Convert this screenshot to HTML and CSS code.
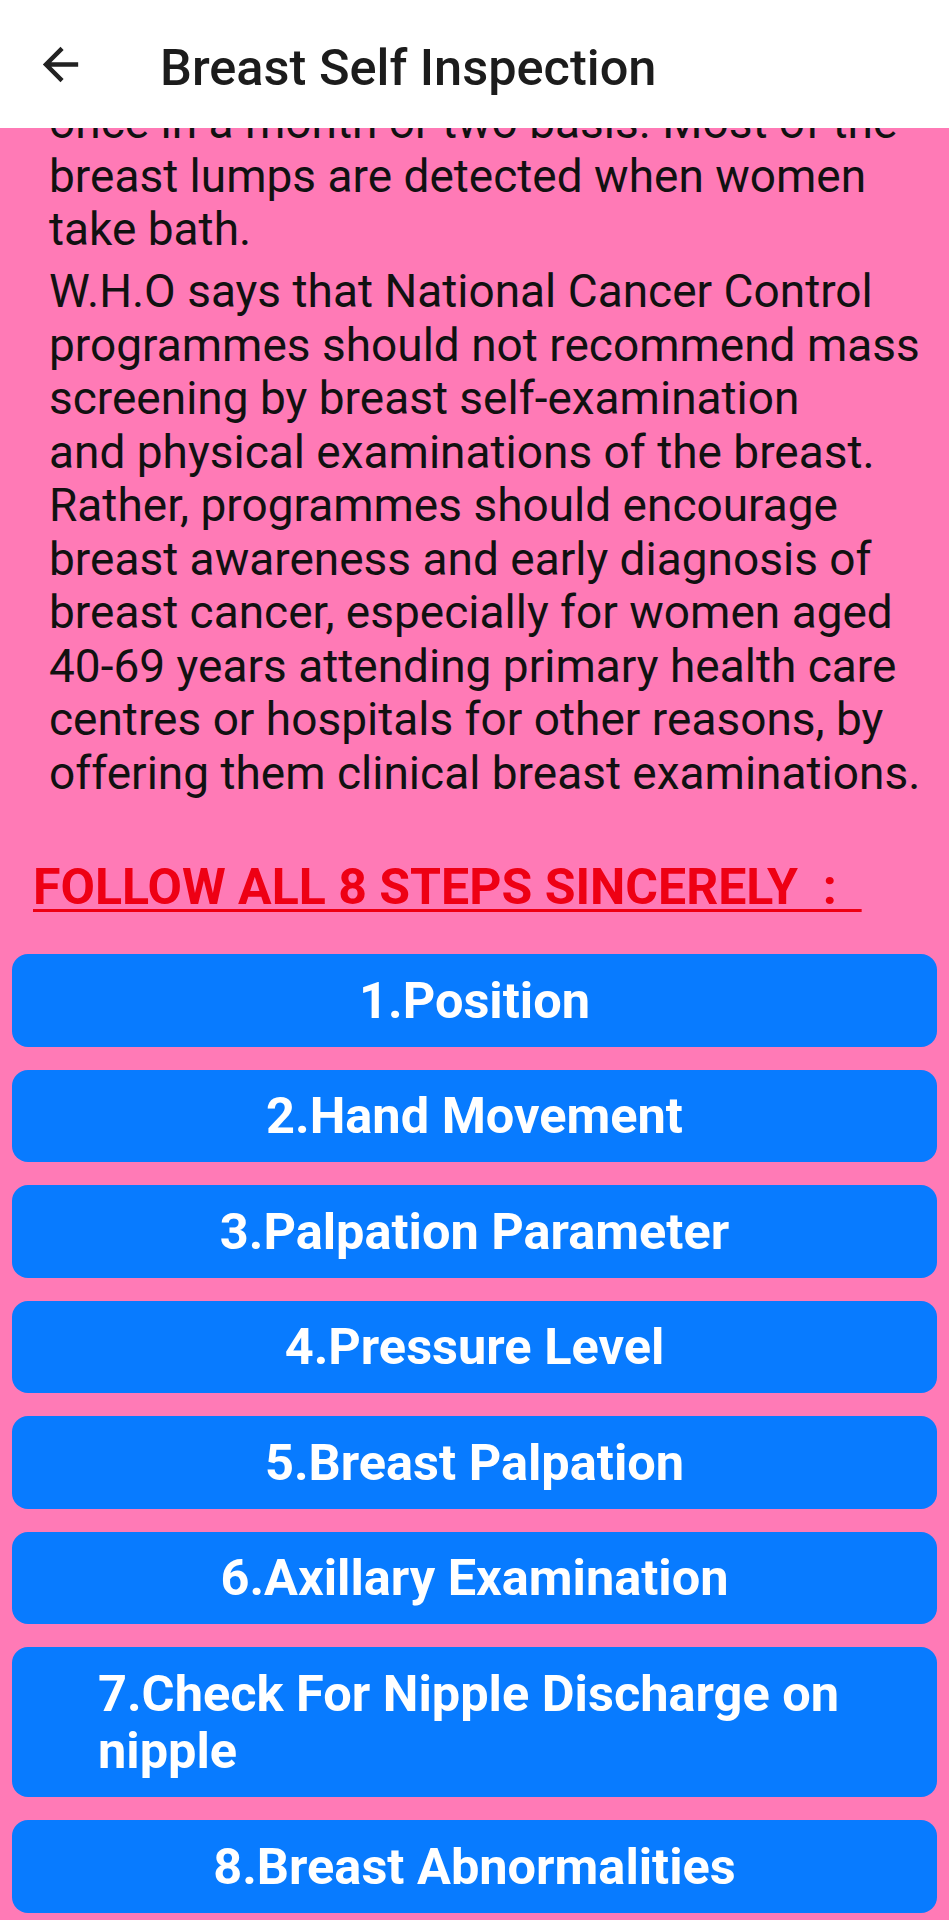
FILE: index.html
```html
<!DOCTYPE html>
<html lang="en">
<head>
<meta charset="utf-8">
<title>Breast Self Inspection</title>
<link rel="stylesheet" href="styles.css">
</head>
<body>
<div class="screen">
  <header class="toolbar">
    <button class="back" aria-label="Back">
      <svg viewBox="0 0 24 24" width="53" height="53"><path d="M20 11H7.83l5.59-5.59L12 4l-8 8 8 8 1.41-1.41L7.83 13H20v-2z" fill="#222"/></svg>
    </button>
    <h1 class="title">Breast Self Inspection</h1>
  </header>
  <main class="content">
    <div class="scroll">
      <p class="para">once in a month or two basis. Most of the breast lumps are detected when women take bath.</p>
      <p class="para">W.H.O says that National Cancer Control programmes should not recommend mass screening by breast self-examination<br>and physical examinations of the breast. Rather, programmes should encourage breast awareness and early diagnosis of breast cancer, especially for women aged <span class="nowrap">40-69</span> years attending primary health care centres or hospitals for other reasons, by offering them clinical breast examinations.</p>
      <h2 class="steps-heading">FOLLOW ALL 8 STEPS SINCERELY &nbsp;: &nbsp;</h2>
      <div class="steps">
        <button class="step"><span>1.Position</span></button>
        <button class="step"><span>2.Hand Movement</span></button>
        <button class="step"><span>3.Palpation Parameter</span></button>
        <button class="step"><span>4.Pressure Level</span></button>
        <button class="step"><span>5.Breast Palpation</span></button>
        <button class="step"><span>6.Axillary Examination</span></button>
        <button class="step"><span>7.Check For Nipple Discharge on nipple</span></button>
        <button class="step"><span>8.Breast Abnormalities</span></button>
      </div>
    </div>
  </main>
</div>
</body>
</html>
```
FILE: styles.css
```css
html, body {
  margin: 0;
  padding: 0;
}
body {
  background: #ff7ab6;
  font-family: Roboto, "Noto Sans", sans-serif;
  width: 949px;
  height: 1920px;
  overflow: hidden;
}
.screen {
  display: flex;
  flex-direction: column;
  height: 1920px;
}
.toolbar {
  position: relative;
  z-index: 2;
  flex: 0 0 128px;
  height: 128px;
  background: #fff;
  display: flex;
  align-items: center;
  box-sizing: border-box;
  padding-left: 34px;
}
.back {
  border: 0;
  background: none;
  padding: 0;
  width: 53px;
  height: 53px;
  display: flex;
}
.title {
  margin: 0 0 0 73px;
  padding-top: 7px;
  font-weight: 500;
  font-size: 50.5px;
  line-height: 60px;
  color: #1c1c1c;
}
.content {
  flex: 1;
  overflow: hidden;
}
.scroll {
  margin-top: -32px;
}
.para {
  margin: 0 10px 0 49px;
  font-size: 46px;
  line-height: 53.5px;
  color: #111;
}
.para + .para {
  margin-top: 8.5px;
}
.nowrap {
  white-space: nowrap;
}
.steps-heading {
  margin: 57px 0 0 33px;
  font-size: 50px;
  font-weight: 700;
  color: #ee0014;
  text-decoration: underline;
  text-decoration-thickness: 3px;
  text-underline-offset: 5px;
  line-height: 60px;
  white-space: pre;
}
.steps {
  display: flex;
  flex-direction: column;
  gap: 23px;
  margin: 37px 12px 0 12px;
}
.step {
  border: 0;
  border-radius: 16px;
  background: #087bff;
  color: #fff;
  font-family: Roboto, "Noto Sans", sans-serif;
  font-weight: 700;
  font-size: 50.5px;
  line-height: 57.5px;
  min-height: 92px;
  box-sizing: border-box;
  padding: 17.5px 86px;
  display: flex;
  align-items: center;
  justify-content: center;
  text-align: left;
}
.step span {
  display: inline-block;
}
```
